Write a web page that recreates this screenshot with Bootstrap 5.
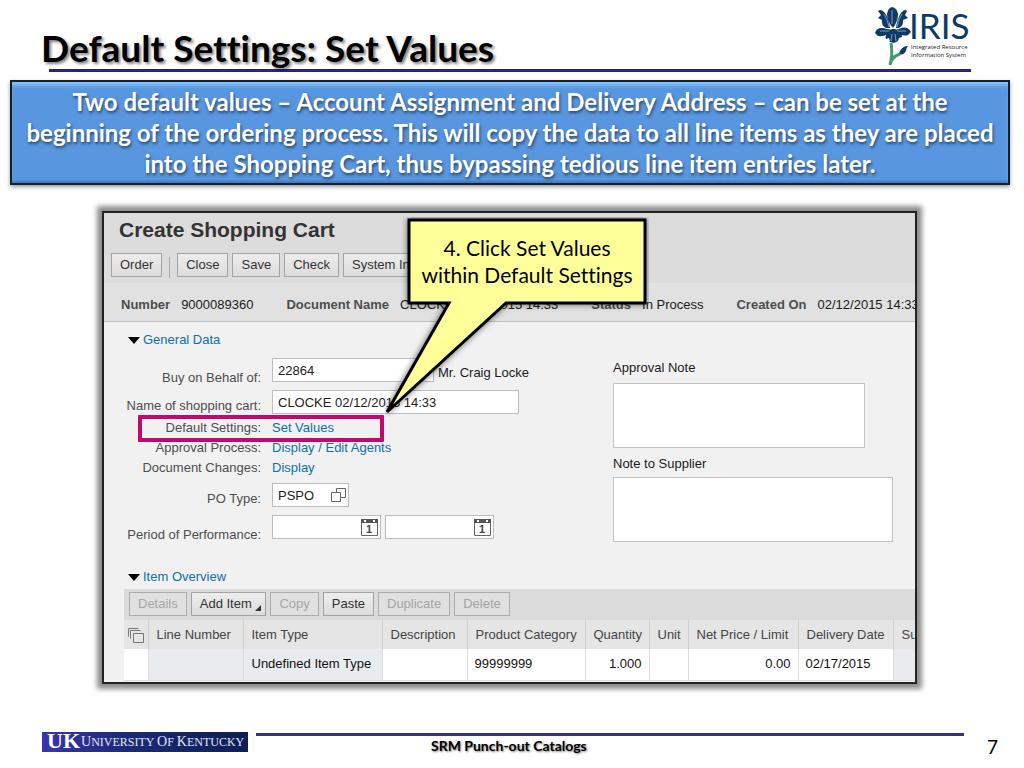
<!DOCTYPE html>
<html lang="en">
<head>
<meta charset="utf-8">
<meta name="viewport" content="width=device-width, initial-scale=1">
<title>Default Settings: Set Values</title>
<link href="https://cdn.jsdelivr.net/npm/bootstrap@5.3.0/dist/css/bootstrap.min.css" rel="stylesheet">
<style>
body { font-family: Lato, sans-serif; font-variant-ligatures: none; color: #000; background: #fff; }
a { text-decoration: none; color: #0f6fa8; }
.slide-head { padding: 0 53px 0 41px; height: 69px; }
.slide-title { font-size: 37px; line-height: 40px; font-weight: 700; text-shadow: 2px 2px 3px rgba(0,0,0,.5); }
.slide-rule { height: 3px; margin: 0 53px 8px 49px; background: #26228a; }
.banner { margin: 0 14px 0 10px; padding: 4px 0; border: 2px solid #14202e; background: #5896e0; color: #fff; font-size: 24px; line-height: 31px; font-weight: 700; text-shadow: 1px 2px 3px rgba(0,0,0,.55); box-shadow: inset 0 5px 4px -2px #8ccbff, inset 0 -3px 2px -1px #4479bd, 0 2px 4px rgba(0,0,0,.4); }
.screen { margin: 26px 107px 0 102px; border: 2px solid #222; background: #f1f1f1; font-family: "Liberation Sans", sans-serif; font-size: 13px; line-height: 20px; color: #1a1a1a; box-shadow: 0 0 5px 5px rgba(0,0,0,.45); }
.clipper { overflow: hidden; white-space: nowrap; padding-bottom: 1px; }
.app-head { background: #dcdcdc; padding: 4px 0 5px 7px; }
.app-title { font-size: 21px; line-height: 26px; font-weight: 700; color: #333; padding-left: 8px; margin-bottom: 10px; }
.tool { font: inherit; line-height: 20px; height: 24px; padding: 0 8px 1px; border: 1px solid #a3a3a3; background: linear-gradient(#ededed,#dcdcdc); color: #333; flex: none; border-radius: 0; }
.tool:disabled { color: #a5a5a5; background: #e0e0e0; border-color: #ababab; }
.sep { width: 1px; height: 21px; background: #aaa; margin: 4px 3px 0; }
.status-bar { background: #e1e1e1; border-bottom: 1px solid #c0c0c0; height: 39px; padding: 12px 0 0 17px; gap: 33px; }
.status-bar dt { color: #4d4d4d; }
.pair { gap: 11px; flex: none; }
.section-title { padding-left: 24px; font-size: 13px; line-height: 20px; margin: 0; gap: 3px; }
.form-side { width: 509px; flex: none; }
.f-row { height: 32px; gap: 11px; position: relative; }
.f-row .cap { width: 157px; text-align: right; color: #4d4d4d; flex: none; padding-top: 6px; }
.f-row.low .cap { padding-top: 10px; }
.f-row.short { height: 28px; }
.f-row.text { height: 20px; }
.f-row.text .cap { padding-top: 0; }
.f-row.last { margin-bottom: 5px; }
.person { margin-left: -7px; padding-top: 5px; }
.box { font: inherit; height: 24px; border: 1px solid #bdbdbd; background: #fff; padding: 0 5px; color: #222; border-radius: 0; }
.field { position: relative; }
.field svg { position: absolute; right: 3px; top: 3px; }
.w-buy { width: 162px; } .w-name { width: 247px; } .w-po { width: 77px; } .w-date { width: 109px; }
.marker { position: absolute; left: 34px; top: -3px; width: 246px; height: 27px; border: 4px solid #bf0a6b; border-radius: 1px; }
.note-cap { display: block; margin-bottom: 5px; }
.note + .note-cap { margin: 6px 0 3px; }
.note { display: block; height: 65px; border: 1px solid #c4c4c4; background: #fff; resize: none; }
.w-note { width: 252px; } .w-wide { width: 280px; }
.items-title { margin-top: 20px; margin-bottom: 2px; }
.corner { margin: 8px -5px 0 0; }
.grid-bar { background: #dbdbdb; margin-left: 20px; height: 31px; padding: 3px 0 0 5px; gap: 4px; }
.items { margin-left: 20px; width: 860px; table-layout: fixed; border-collapse: collapse; color: #111; }
.items th { font-weight: 400; background: #e5e5e5; color: #444; height: 29px; border-right: 1px solid #cfcfcf; padding: 0 0 0 8px; }
.items td { background: #fff; height: 31px; border-right: 1px solid #ddd; border-bottom: 1px solid #ddd; padding: 0 7px; }
.items td.off { background: #e9ecef; }
.callout { position: absolute; left: 281px; top: 4px; width: 264px; height: 200px; }
.callout svg { position: absolute; inset: 0; }
.callout p { position: relative; margin: 17px 0 0 22px; width: 240px; font-family: Lato, sans-serif; font-size: 21px; line-height: 27px; color: #000; }
.slide-foot { margin-top: 48px; padding: 0 26px 0 42px; gap: 8px; }
.uk { width: 206px; height: 20px; background: linear-gradient(90deg,#3a34b0,#1c2a78 40%,#0c1e56); color: #e4e8f6; font: 12px/19px "Liberation Serif", serif; flex: none; overflow: hidden; white-space: nowrap; }
.uk b { font-size: 22px; line-height: 18px; color: #fff; margin: 0 1px 0 5px; }
.uk i { font-size: 14px; font-style: normal; }
.foot-mid { border-top: 3px solid #35307f; margin-top: 1px; padding-left: 175px; }
.foot-name { font-size: 14px; line-height: 20px; font-weight: 700; text-shadow: 1px 1px 2px rgba(0,0,0,.5); }
.page-no { font-size: 19px; line-height: 26px; margin: 2px 0 0 15px; }
</style>
</head>
<body>
<header>
  <div class="slide-head d-flex justify-content-between">
    <h1 class="slide-title mb-0 mt-4 pt-1">Default Settings: Set Values</h1>
    <svg class="flex-shrink-0" width="100" height="69" viewBox="871 0 100 69" role="img" aria-label="IRIS Integrated Resource Information System">
      <g fill="#0d3a6b">
        <path d="M892 7Q897 8 898 14Q898 21 893 28Q887 21 887 14Q888 8 892 7Z"/>
        <path d="M893 30L887 29Q877 26 875 33L878 36Q886 37 893 31Z"/>
        <path d="M890 28Q889 19 885 13Q881 8 878 11L881 15L878 18L882 20Q881 25 886 28Z"/>
        <path d="M895 30L899 29Q907 25 911 32L908 35Q902 37 894 31Z"/>
        <path d="M896 28Q897 19 901 13Q905 8 907 11L905 15L908 18L903 20Q904 25 899 28Z"/>
        <path d="M892 29Q884 34 886 39L889 38L890 42L894 43L898 41L899 38L902 37Q902 32 895 29Z"/>
        <path d="M908 46Q901 46 899 54Q903 56 906 51Q906 48 908 46Z"/>
      </g>
      <path d="M892 10V24M884 14Q888 20 889 27M902 14Q898 20 897 27M880 31L889 31M906 31L897 31M892 34L891 41M895 34L896 41" stroke="#fff" stroke-width=".5" fill="none"/>
      <path d="M891 43Q893 54 890 65M890 65Q891 57 900 54" stroke="#3f9c6b" stroke-width="3" fill="none"/>
      <text x="909" y="39" font-family="Lato" font-size="35" fill="#0d3a6b">IRIS</text>
      <text x="911" y="49" font-family="Open Sans" font-size="6" fill="#222">Integrated Resource</text>
      <text x="911" y="57" font-family="Open Sans" font-size="6" fill="#222">Information System</text>
    </svg>
  </div>
  <div class="slide-rule"></div>
</header>
<main>
  <div class="banner text-center">Two default values – Account Assignment and Delivery Address – can be set at the<br>beginning of the ordering process. This will copy the data to all line items as they are placed<br>into the Shopping Cart, thus bypassing tedious line item entries later.</div>

  <section class="screen position-relative">
    <div class="clipper">
      <div class="app-head">
        <h2 class="app-title mt-0">Create Shopping Cart</h2>
        <div class="d-flex gap-1">
          <button class="tool" type="button">Order</button><span class="sep"></span>
          <button class="tool" type="button">Close</button>
          <button class="tool" type="button">Save</button>
          <button class="tool" type="button">Check</button>
          <button class="tool" type="button">System Information</button>
        </div>
      </div>
      <dl class="status-bar d-flex mb-0">
        <div class="pair d-flex"><dt>Number</dt><dd>9000089360</dd></div>
        <div class="pair d-flex"><dt>Document Name</dt><dd>CLOCKE 02/12/2015 14:33</dd></div>
        <div class="pair d-flex"><dt>Status</dt><dd>In Process</dd></div>
        <div class="pair d-flex"><dt>Created On</dt><dd>02/12/2015 14:33</dd></div>
      </dl>

      <h3 class="section-title d-flex align-items-center mt-2"><svg width="12" height="7"><path d="M0 0H12L6 7Z"/></svg><a href="#general">General Data</a></h3>
      <div class="d-flex" id="general">
        <div class="form-side mt-2">
          <div class="f-row low d-flex align-items-start"><label class="cap" for="buy">Buy on Behalf of:</label><input class="box w-buy" id="buy" value="22864"><span class="person">Mr. Craig Locke</span></div>
          <div class="f-row short d-flex align-items-start"><label class="cap" for="cart">Name of shopping cart:</label><input class="box w-name" id="cart" value="CLOCKE 02/12/2015 14:33"></div>
          <div class="f-row text d-flex"><span class="cap">Default Settings:</span><a href="#set">Set Values</a><span class="marker"></span></div>
          <div class="f-row text d-flex"><span class="cap">Approval Process:</span><a href="#agents">Display / Edit Agents</a></div>
          <div class="f-row text last d-flex"><span class="cap">Document Changes:</span><a href="#changes">Display</a></div>
          <div class="f-row d-flex align-items-start"><label class="cap" for="po">PO Type:</label><span class="field"><input class="box w-po" id="po" value="PSPO"><svg width="16" height="18" fill="#fff" stroke="#666"><path d="M6.500 2.500H15.500V11.500H6.500Z"/><path d="M1.500 6.500H10.500V15.500H1.500Z"/></svg></span></div>
          <div class="f-row low d-flex align-items-start"><label class="cap" for="from">Period of Performance:</label>
            <div class="d-flex gap-1">
              <span class="field"><input class="box w-date" id="from"><svg width="17" height="18"><path d="M.5 1.500H16.500V17.500H.5Z" fill="#fff" stroke="#666"/><path d="M0 1H17V5H0Z" fill="#555"/><path d="M3 2h2v2H3ZM12 2h2v2H12Z" fill="#fff"/><text x="5" y="15" font-size="11" font-weight="700" fill="#444">1</text></svg></span>
              <span class="field"><input class="box w-date" aria-label="Period end"><svg width="17" height="18"><path d="M.5 1.500H16.500V17.500H.5Z" fill="#fff" stroke="#666"/><path d="M0 1H17V5H0Z" fill="#555"/><path d="M3 2h2v2H3ZM12 2h2v2H12Z" fill="#fff"/><text x="5" y="15" font-size="11" font-weight="700" fill="#444">1</text></svg></span>
            </div>
          </div>
        </div>
        <div class="pt-2">
          <label class="note-cap" for="approval">Approval Note</label>
          <textarea class="note w-note" id="approval"></textarea>
          <label class="note-cap" for="supplier">Note to Supplier</label>
          <textarea class="note w-wide" id="supplier"></textarea>
        </div>
      </div>

      <h3 class="section-title items-title d-flex align-items-center"><svg width="12" height="7"><path d="M0 0H12L6 7Z"/></svg><a href="#items">Item Overview</a></h3>
      <div class="grid-bar d-flex">
        <button class="tool" type="button" disabled>Details</button>
        <button class="tool" type="button">Add Item <svg class="corner" width="7" height="7"><path d="M6 0V6H0Z" fill="#333"/></svg></button>
        <button class="tool" type="button" disabled>Copy</button>
        <button class="tool" type="button">Paste</button>
        <button class="tool" type="button" disabled>Duplicate</button>
        <button class="tool" type="button" disabled>Delete</button>
      </div>
      <table class="items" id="items">
        <colgroup><col style="width:24px"><col style="width:95px"><col style="width:139px"><col style="width:85px"><col style="width:118px"><col style="width:64px"><col style="width:39px"><col style="width:110px"><col style="width:95px"><col></colgroup>
        <thead><tr><th class="p-0 text-center" aria-label="Select"><svg width="16" height="18" fill="#e5e5e5" stroke="#777"><path d="M.5 10.500V2.500H10.500M2.500 12.500V4.500H12.500" fill="none"/><path d="M5.500 7.500H15.500V16.500H5.500Z"/></svg></th><th>Line Number</th><th>Item Type</th><th>Description</th><th>Product Category</th><th>Quantity</th><th>Unit</th><th>Net Price / Limit</th><th>Delivery Date</th><th>Supplier</th></tr></thead>
        <tbody><tr><td></td><td class="off"></td><td class="off px-2">Undefined Item Type</td><td></td><td>99999999</td><td class="text-end">1.000</td><td></td><td class="text-end">0.00</td><td>02/17/2015</td><td class="off"></td></tr></tbody>
      </table>
    </div>
    <div class="callout">
      <svg width="264" height="200"><path d="M24 3H260V86H121L2 195L64 86H24Z" fill="#ffff99" stroke="#000" stroke-width="3" style="filter:drop-shadow(0 0 3px rgba(0,0,0,.6))"/></svg>
      <p class="text-center">4. Click Set Values<br>within Default Settings</p>
    </div>
  </section>
</main>
<footer class="slide-foot d-flex align-items-start">
  <div class="uk d-flex"><b>UK</b><span><i>U</i>NIVERSITY <i>O</i>F <i>K</i>ENTUCKY</span></div>
  <div class="foot-mid flex-grow-1"><span class="foot-name d-block">SRM Punch-out Catalogs</span></div>
  <span class="page-no">7</span>
</footer>
<script src="https://cdn.jsdelivr.net/npm/bootstrap@5.3.0/dist/js/bootstrap.bundle.min.js"></script>
</body>
</html>
